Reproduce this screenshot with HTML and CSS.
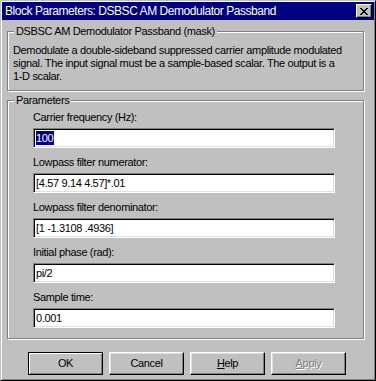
FILE: index.html
```html
<!DOCTYPE html>
<html lang="en">
<head>
    <meta charset="UTF-8">
    <title>Block Parameters: DSBSC AM Demodulator Passband</title>
    <link rel="stylesheet" href="styles.css">
</head>
<body>
    <div class="window">
        <!-- barra de titulo -->
        <div class="titlebar">
            <span class="title">Block Parameters: DSBSC AM Demodulator Passband</span>
            <span class="close">
                <svg width="8" height="7" viewBox="0 0 8 7" shape-rendering="crispEdges">
                    <path d="M0 0h2v1h1v1h2v-1h1v-1h2v1h-1v1h-1v1h-1v1h1v1h1v1h1v1h-2v-1h-1v-1h-2v1h-1v1h-2v-1h1v-1h1v-1h1v-1h-1v-1h-1v-1h-1z" fill="#000"/>
                </svg>
            </span>
        </div>

        <div class="content">
            <fieldset class="group group-mask">
                <legend>DSBSC AM Demodulator Passband (mask)</legend>
                <p class="desc">Demodulate a double-sideband suppressed carrier amplitude modulated<br>signal. The input signal must be a sample-based scalar. The output is a<br>1-D scalar.</p>
            </fieldset>

            <fieldset class="group group-params">
                <legend>Parameters</legend>
                <div class="field">
                    <div class="label">Carrier frequency (Hz):</div>
                    <div class="edit"><span class="sel">100</span></div>
                </div>
                <div class="field">
                    <div class="label">Lowpass filter numerator:</div>
                    <div class="edit">[4.57 9.14 4.57]*.01</div>
                </div>
                <div class="field">
                    <div class="label">Lowpass filter denominator:</div>
                    <div class="edit">[1 -1.3108 .4936]</div>
                </div>
                <div class="field">
                    <div class="label">Initial phase (rad):</div>
                    <div class="edit">pi/2</div>
                </div>
                <div class="field">
                    <div class="label">Sample time:</div>
                    <div class="edit">0.001</div>
                </div>
            </fieldset>

            <div class="buttons">
                <div class="btn btn-default">OK</div>
                <div class="btn">Cancel</div>
                <div class="btn"><u>H</u>elp</div>
                <div class="btn btn-disabled"><u>A</u>pply</div>
            </div>
        </div>
    </div>
</body>
</html>
```

FILE: styles.css
```css
body {
    margin: 0;
    font-family: "Liberation Sans", Arial, sans-serif;
    font-size: 11px;
    letter-spacing: -0.35px;
    color: #000;
    background: #c0c0c0;
}

.window {
    width: 376px;
    height: 381px;
    box-sizing: border-box;
    padding: 1px;
    background: #c0c0c0;
    border: 1px solid;
    border-color: #c0c0c0 #000 #000 #c0c0c0;
    box-shadow: inset 1px 1px 0 #fff, inset -1px -1px 0 #808080;
}

.titlebar {
    height: 18px;
    background: #000080;
    color: #fff;
    display: flex;
    align-items: center;
    justify-content: space-between;
    padding: 0 2px 0 3px;
}
.title {
    font-size: 12px;
    letter-spacing: -0.45px;
    line-height: 18px;
    white-space: nowrap;
}
.close {
    width: 16px;
    height: 14px;
    box-sizing: border-box;
    background: #c0c0c0;
    border: 1px solid;
    border-color: #fff #000 #000 #fff;
    box-shadow: inset -1px -1px 0 #808080;
    display: flex;
    align-items: center;
    justify-content: center;
}
.close svg {
    display: block;
    margin-left: -1px;
}

.content {
    padding: 5px 0 0 5px;
}

/* cadre grave */
.group {
    width: 357px;
    box-sizing: border-box;
    margin: 0;
    padding: 0;
    border: 1px solid #808080;
    box-shadow: inset 1px 1px 0 #fff, 1px 1px 0 #fff;
}
.group legend {
    margin-left: 6px;
    padding: 0 2px;
    line-height: 13px;
    background: #c0c0c0;
}

.desc {
    margin: 6px 0 0 0;
    padding: 0 0 7px 5px;
    line-height: 13px;
    white-space: nowrap;
}

.group-params {
    margin-top: 3px;
    padding: 4px 0 0 25px;
    height: 245px;
}
.group-params legend {
    margin-left: -19px;
}
.field {
    margin-bottom: 8px;
}
.label {
    line-height: 13px;
    margin-bottom: 4px;
}
.edit {
    width: 302px;
    height: 20px;
    box-sizing: border-box;
    background: #fff;
    border: 1px solid;
    border-color: #808080 #fff #fff #808080;
    box-shadow: inset 1px 1px 0 #000, inset -1px -1px 0 #dfdfdf;
    padding: 2px 0 0 2px;
    line-height: 14px;
    white-space: nowrap;
}
.sel {
    display: inline-block;
    background: #000080;
    color: #fff;
    line-height: 14px;
    padding-right: 1px;
}

.buttons {
    display: flex;
    gap: 6px;
    margin: 13px 0 0 21px;
}
.btn {
    width: 75px;
    height: 23px;
    box-sizing: border-box;
    border: 1px solid;
    border-color: #fff #000 #000 #fff;
    box-shadow: inset -1px -1px 0 #808080, inset 1px 1px 0 #dfdfdf;
    display: flex;
    align-items: center;
    justify-content: center;
    line-height: 13px;
}
.btn u {
    text-decoration-thickness: 1px;
}
.btn-default {
    border-color: #000;
    box-shadow: inset 1px 1px 0 #fff, inset -1px -1px 0 #808080;
}
.btn-disabled {
    color: #808080;
    text-shadow: 1px 1px 0 #fff;
}
```
